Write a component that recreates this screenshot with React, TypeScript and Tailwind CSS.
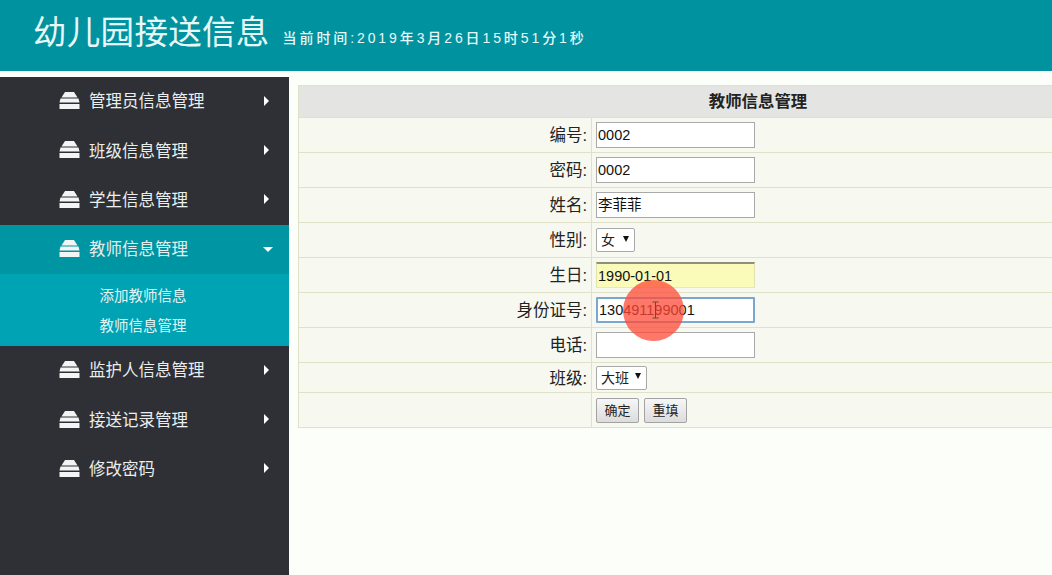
const menuBefore = ["管理员信息管理", "班级信息管理", "学生信息管理"];
const menuAfter = ["监护人信息管理", "接送记录管理", "修改密码"];

function LayersIcon() {
  return (
    <svg width="21" height="17" viewBox="0 0 21 17" className="mb-[2px] shrink-0" fill="#f2f5f4">
      <path d="M6 0h9l3.500 5.500H2.500z" />
      <path d="M1.500 6.500h18l1 4H0.500z" />
      <path d="M0.500 12h20V17H0.500z" />
    </svg>
  );
}

function MenuItem({ label, open }: { label: string; open?: boolean }) {
  return (
    <div className={`flex h-[49.3px] items-center pl-[59px] ${open ? "bg-[#0095a3]" : ""}`}>
      <LayersIcon />
      <span className="ml-[9px] w-[175px] text-[16.5px] text-[#e9eeee]">{label}</span>
      {open ? (
        <span className="ml-[-1px] mb-[1px] h-0 w-0 border-x-[5px] border-t-[5px] border-x-transparent border-t-white" />
      ) : (
        <span className="mb-[2px] h-0 w-0 border-y-[5px] border-l-[5px] border-y-transparent border-l-white" />
      )}
    </div>
  );
}

function Row({ label, h, children }: { label: string; h: string; children: React.ReactNode }) {
  return (
    <tr className={`${h} border-b border-[#dfe2c8]`}>
      <td className="w-[293px] border-r border-[#dfe2c8] pr-[4px] pt-[1px] text-right align-middle text-[16.5px] text-[#222]">{label}</td>
      <td className="pl-[4px] align-middle">{children}</td>
    </tr>
  );
}

function TextBox({ value, className = "border border-[#a9a9a9] bg-white" }: { value?: string; className?: string }) {
  return (
    <div className={`flex h-[26px] w-[159px] items-center overflow-hidden pl-[1px] pt-[2px] text-[14.5px] text-[#111] ${className}`}>
      {value}
    </div>
  );
}

function SelectBox({ value, w }: { value: string; w: string }) {
  return (
    <div className={`flex h-[24px] ${w} items-center justify-between rounded-[2px] border border-[#a9a9a9] bg-white pl-[4px] pr-[5px] text-[14px] text-[#222]`}>
      <span className="pt-[1px]">{value}</span>
      <span className="mb-[3px] h-0 w-0 border-x-[3.5px] border-t-[6px] border-x-transparent border-t-[#111]" />
    </div>
  );
}

function FormButton({ label }: { label: string }) {
  return (
    <div className="flex h-[25px] w-[43px] items-center justify-center rounded-[2px] border border-[#a3a3a3] bg-gradient-to-b from-[#f6f6f6] to-[#dcdcdc] pt-[1px] text-[13px] text-[#222]">
      {label}
    </div>
  );
}

export default function App() {
  return (
    <div
      className="relative flex h-[575px] w-[1052px] flex-col overflow-hidden bg-[#fcfefa]"
      style={{ fontFamily: '"Liberation Sans", "Noto Sans CJK SC", sans-serif' }}
    >
      <header className="flex h-[71px] shrink-0 items-center bg-[#00929f] pb-[5px] pl-[33px] text-[#e8f8f8]">
        <h1 className="text-[33.500px] leading-none tracking-[0.3px]">幼儿园接送信息</h1>
        <span className="ml-[13px] mt-[10px] text-[14px] font-medium tracking-[2.9px]">当前时间:2019年3月26日15时51分1秒</span>
      </header>

      <div className="mt-[6px] flex min-h-0 flex-1">
        <aside className="w-[289px] shrink-0 bg-[#2f3035]">
          {menuBefore.map((m) => (
            <MenuItem key={m} label={m} />
          ))}
          <MenuItem label="教师信息管理" open />
          <div className="flex h-[72px] flex-col justify-center gap-[12px] bg-[#00a3b4] pl-[99.5px] pt-[1px] text-[14.500px] leading-[18px] text-[#e2f5f6]">
            <div>添加教师信息</div>
            <div>教师信息管理</div>
          </div>
          {menuAfter.map((m) => (
            <MenuItem key={m} label={m} />
          ))}
        </aside>

        <main className="min-w-0 flex-1 pl-[9px] pt-[8px]">
          <table className="w-[760px] border-collapse border border-[#dfe2c8] bg-[#f7f8ef]">
            <tbody>
              <tr className="h-[32px] border-b border-[#dfe2c8] bg-[#e4e5e3]">
                <th colSpan={2} className="pl-[160px] text-center text-[16.400px] font-bold text-[#222]">
                  教师信息管理
                </th>
              </tr>
              <Row label="编号:" h="h-[35px]"><TextBox value="0002" /></Row>
              <Row label="密码:" h="h-[35px]"><TextBox value="0002" /></Row>
              <Row label="姓名:" h="h-[35px]"><TextBox value="李菲菲" /></Row>
              <Row label="性别:" h="h-[35px]"><SelectBox value="女" w="w-[39px]" /></Row>
              <Row label="生日:" h="h-[35px]">
                <TextBox value="1990-01-01" className="border-x border-b border-t-2 border-x-[#e0e2b0] border-b-[#e6e8c0] border-t-[#8f8f80] bg-[#fafbb8]" />
              </Row>
              <Row label="身份证号:" h="h-[35px]">
                <TextBox value="130491199001" className="rounded-[1px] border-2 border-[#7ba6d0] bg-white" />
              </Row>
              <Row label="电话:" h="h-[35px]"><TextBox /></Row>
              <Row label="班级:" h="h-[30px]"><SelectBox value="大班" w="w-[51px]" /></Row>
              <Row label="" h="h-[35px]">
                <div className="flex gap-[5px]">
                  <FormButton label="确定" />
                  <FormButton label="重填" />
                </div>
              </Row>
            </tbody>
          </table>
        </main>
      </div>

      {/* click highlight from the screen recording */}
      <div className="absolute left-[623px] top-[280px] h-[61px] w-[61px] rounded-full bg-[#ff4a35]/75" />
      <svg className="absolute left-[651px] top-[301px]" width="9" height="18" viewBox="0 0 9 18" fill="none" stroke="#6b4a30" strokeWidth="1">
        <path d="M1.500 1h6M4.500 1v16M1.500 17h6" />
      </svg>
    </div>
  );
}
